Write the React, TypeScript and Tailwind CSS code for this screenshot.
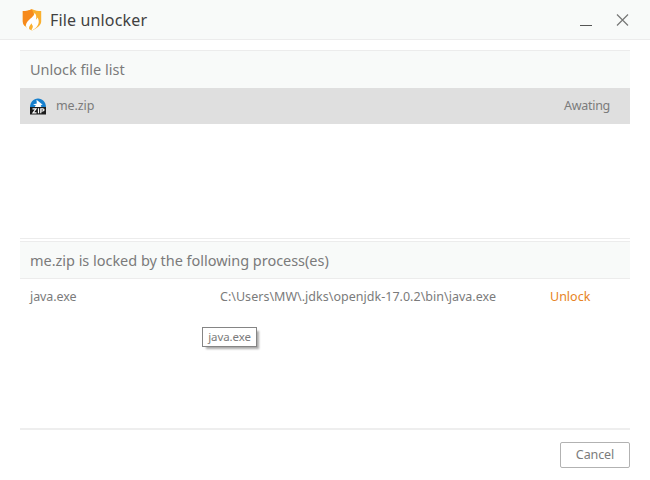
import React from 'react';

function ShieldLogo() {
  return (
    <svg width="20" height="24" viewBox="0 0 20 24" className="shrink-0">
      <path d="M10 1.200C7 2.600 4 3 .8 3v10.500c0 4 4.700 7 9.200 9 4.500-2 9.200-5 9.200-9V3C16 3 13 2.600 10 1.200z" fill="#fab02f" />
      <path d="M10 1.200C7 2.600 4 3 .8 3v10.500c0 1.800.8 3.300 2 4.600L12 7z" fill="#f68a1c" />
      <path d="M12.500 4.800c0 3-3 4.900-5.500 7.200-3.200 3-4 6-1.500 8.600l1.700.9c-.7-2.500.6-4.300 2.600-6.300 0 1.300.3 2 1 2.600.2 1.400-.3 2.700-1.300 4.200l.5.500c4.500-2.500 7-5.700 6.700-9.500-.1-1.400-.5-2.500-1.200-3.500-.3 1-.8 1.700-1.600 2.200.8-2.500.4-5-1.400-6.900z" fill="#fff" />
    </svg>
  );
}

function ZipIcon() {
  return (
    <svg width="16" height="17" viewBox="0 0 16 17" className="shrink-0">
      <path d="M0 9.500C0 4 3.500 .5 8 .5s8 3.500 8 9z" fill="#167fcd" />
      <path d="M6.500 1.800l6.200 5-2.200.2 1 1.200-1.500 1.300H6L4.600 8.200l1.600-.7-3.200-.9 3.800-1.200z" fill="#fff" />
      <rect y="9" width="16" height="7.500" fill="#1c1c1c" />
      <path d="M2.500 10.800h3.500l-3 4h3.500M8.500 10.300v5M10.800 15.300v-4.500h2q1.200 0 1.200 1t-1.200 1.200h-2" fill="none" stroke="#fff" strokeWidth="1.200" />
    </svg>
  );
}

export default function App() {
  return (
    <div className="flex h-[480px] w-[650px] flex-col bg-white font-['Noto_Sans',sans-serif] text-[12.5px] text-[#7b7b7b]">
      <header className="flex h-10 shrink-0 items-center border-b border-[#ececec] bg-[#f8faf9] pl-[22px] pr-[21px]">
        <ShieldLogo />
        <h1 className="ml-2 flex-1 text-base tracking-[0.15px] text-[#414141]">File unlocker</h1>
        <button aria-label="Minimize" className="mr-6 mt-[11px] h-px w-3 bg-[#555]" />
        <button aria-label="Close">
          <svg width="13" height="12" viewBox="0 0 13 12" fill="none" stroke="#777" strokeWidth="1.200">
            <path d="M1 .5l11 11M12 .5L1 11.500" />
          </svg>
        </button>
      </header>

      <main className="flex flex-1 flex-col px-5 pt-[10px]">
        <section className="h-[189px] border-b border-[#ececec]">
          <h2 className="flex h-[38px] items-center border-t border-[#ececec] bg-[#f8faf9] pl-[10px] text-[14.5px]">Unlock file list</h2>
          <div className="flex h-9 items-center bg-[#dfdfdf] pl-[10px] pr-[20px]">
            <ZipIcon />
            <span className="ml-[10px] flex-1 tracking-[-0.1px]">me.zip</span>
            <span className="tracking-[-0.3px]">Awating</span>
          </div>
        </section>

        <section className="relative mt-[2px] h-[187px]">
          <h2 className="flex h-[38px] items-center border-y border-[#ececec] bg-[#f8faf9] pl-[10px] pt-[2px] text-[14.5px] tracking-[-0.03px]">me.zip is locked by the following process(es)</h2>
          <div className="flex h-9 items-center pl-[10px]">
            <span className="w-[190px] tracking-[-0.1px]">java.exe</span>
            <span className="w-[330px] tracking-[0.02px]">C:\Users\MW\.jdks\openjdk-17.0.2\bin\java.exe</span>
            <button className="text-[#e78323]">Unlock</button>
          </div>
          <div className="absolute left-[182px] top-[86px] flex h-5 w-[55px] items-center justify-center border border-[#858585] bg-white text-[11.5px] tracking-[-0.1px] shadow-[3px_3px_2px_-1px_#aaa]">java.exe</div>
        </section>

        <footer className="flex justify-end border-t-2 border-[#eeeeee] pt-3">
          <button className="h-[26px] w-[70px] rounded-[2px] border border-[#b2b2b2] bg-white tracking-[-0.1px]">Cancel</button>
        </footer>
      </main>
    </div>
  );
}
